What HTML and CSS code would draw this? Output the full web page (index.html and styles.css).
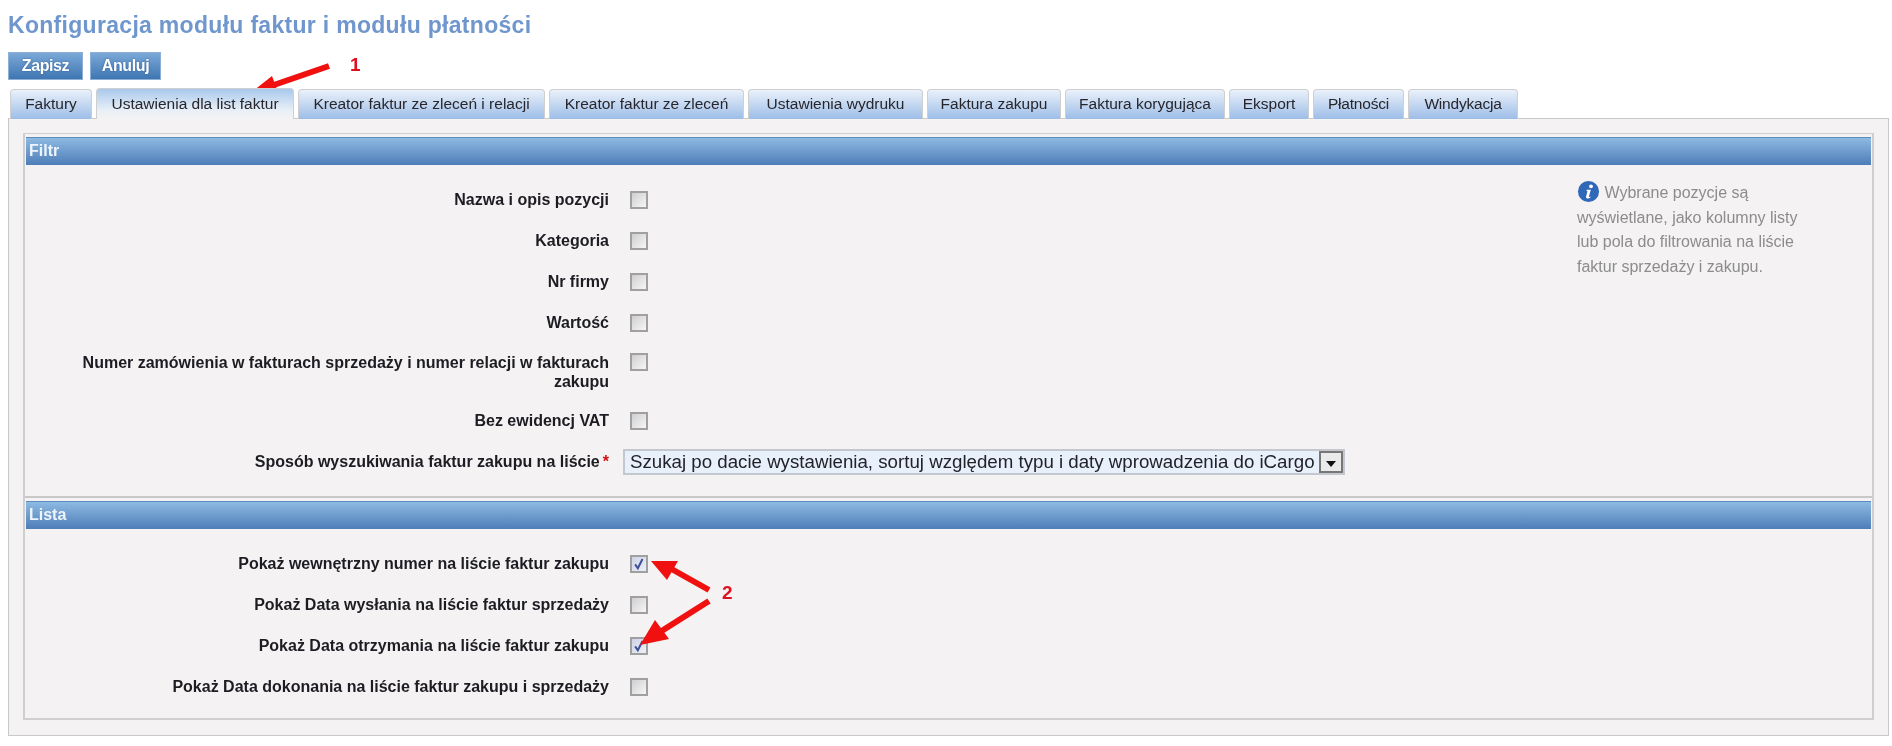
FILE: index.html
```html
<!DOCTYPE html>
<html lang="pl">
<head>
<meta charset="utf-8">
<title>Konfiguracja modułu faktur i modułu płatności</title>
<link rel="stylesheet" href="styles.css">
</head>
<body>
<div class="page">
  <h1 class="title">Konfiguracja modułu faktur i modułu płatności</h1>
  <div class="actions">
    <button class="btn btn-save" type="button">Zapisz</button>
    <button class="btn btn-cancel" type="button">Anuluj</button>
  </div>
  <nav class="tabs">
    <a class="tab">Faktury</a>
    <a class="tab active">Ustawienia dla list faktur</a>
    <a class="tab">Kreator faktur ze zleceń i relacji</a>
    <a class="tab">Kreator faktur ze zleceń</a>
    <a class="tab">Ustawienia wydruku</a>
    <a class="tab">Faktura zakupu</a>
    <a class="tab">Faktura korygująca</a>
    <a class="tab">Eksport</a>
    <a class="tab tight">Płatności</a>
    <a class="tab tight">Windykacja</a>
  </nav>
  <div class="panel">
    <div class="fieldset">
      <h2 class="section-head">Filtr</h2>
      <div class="section filter">
        <div class="form">
          <div class="row"><label class="lbl">Nazwa i opis pozycji</label><span class="cb"></span></div>
          <div class="row"><label class="lbl">Kategoria</label><span class="cb"></span></div>
          <div class="row"><label class="lbl">Nr firmy</label><span class="cb"></span></div>
          <div class="row"><label class="lbl">Wartość</label><span class="cb"></span></div>
          <div class="row row-multi"><label class="lbl">Numer zamówienia w fakturach sprzedaży i numer relacji w fakturach zakupu</label><span class="cb"></span></div>
          <div class="row"><label class="lbl">Bez ewidencj VAT</label><span class="cb"></span></div>
          <div class="row"><label class="lbl">Sposób wyszukiwania faktur zakupu na liście<span class="req">*</span></label>
            <div class="select"><span class="select-text">Szukaj po dacie wystawienia, sortuj względem typu i daty wprowadzenia do iCargo</span><span class="select-arrow"></span></div>
          </div>
        </div>
        <p class="note"><svg class="info" viewBox="0 0 24 24" width="23" height="23"><circle cx="12" cy="12" r="11" fill="#2f68b8"/><circle cx="14.6" cy="6.6" r="2" fill="#fff"/><path d="M10 10.2h4.400l-2 7.200c-.1.500.3.600 1.600-.3l.2.800c-1.200 1.300-5.200 2.200-4.800-.2l1.500-6.200-1.100-.3z" fill="#fff"/></svg> Wybrane pozycje są wyświetlane, jako kolumny listy lub pola do filtrowania na liście faktur sprzedaży i zakupu.</p>
      </div>
      <h2 class="section-head">Lista</h2>
      <div class="section list">
        <div class="form">
          <div class="row"><label class="lbl">Pokaż wewnętrzny numer na liście faktur zakupu</label><span class="cb checked"><svg viewBox="0 0 18 18" width="16" height="16"><path d="M4 9.500l3.500 5L13.500 2.500" fill="none" stroke="#3d4f96" stroke-width="2.500"/></svg></span></div>
          <div class="row"><label class="lbl">Pokaż Data wysłania na liście faktur sprzedaży</label><span class="cb"></span></div>
          <div class="row"><label class="lbl">Pokaż Data otrzymania na liście faktur zakupu</label><span class="cb checked"><svg viewBox="0 0 18 18" width="16" height="16"><path d="M4 9.500l3.500 5L13.500 2.500" fill="none" stroke="#3d4f96" stroke-width="2.500"/></svg></span></div>
          <div class="row"><label class="lbl">Pokaż Data dokonania na liście faktur zakupu i sprzedaży</label><span class="cb"></span></div>
        </div>
      </div>
    </div>
  </div>
  <svg class="marks" width="1892" height="746" viewBox="0 0 1892 746">
    <g fill="none" stroke="#f01010" stroke-width="6">
      <path d="M329 66 L268 87"/>
      <path d="M709 590 L668 567"/>
      <path d="M709 601 L660 632"/>
    </g>
    <g fill="#f01010">
      <path d="M249 94 L272 76 L279 95 Z"/>
      <path d="M651 561 L678 561 L667 580 Z"/>
      <path d="M640 645 L655 620 L669 639 Z"/>
    </g>
  </svg>
  <span class="mark-num mark-1">1</span>
  <span class="mark-num mark-2">2</span>
</div>
</body>
</html>
```
FILE: styles.css
```css
* { box-sizing: border-box; }
html, body { margin: 0; padding: 0; background: #fff; }
body { font-family: "Liberation Sans", Arial, sans-serif; color: #1c1c22; }
.page { position: relative; width: 1892px; height: 746px; padding: 12px 3px 0 8px; overflow: hidden; filter: blur(.35px); }
.title { margin: 0; font-size: 23px; line-height: 26px; font-weight: bold; color: #6f96cd; letter-spacing: .3px; }
.actions { display: flex; gap: 7px; margin-top: 14px; }
.btn { height: 28px; padding: 0; font: bold 16px "Liberation Sans", Arial, sans-serif; color: #fff; letter-spacing: -.4px; border: 1px solid #8db1d6; background: linear-gradient(#7ba8d8, #3f76b2); text-shadow: 0 0 2px #2d5c96; }
.btn-save { width: 75px; }
.btn-cancel { width: 71px; }
.tabs { display: flex; gap: 4px; margin-top: 9px; align-items: flex-end; height: 30px; position: relative; z-index: 1; margin-bottom: -1px; padding-left: 2px; }
.tab { height: 30px; line-height: 28px; text-align: center; font-size: 15.500px; white-space: nowrap; color: #26262c; border: 1px solid #cfcfcf; border-bottom: 0; border-radius: 4px 4px 0 0; background: linear-gradient(#eaf1fa, #9dbde8); }
.tab:nth-child(1) { width: 82px; }
.tab:nth-child(2) { width: 198px; }
.tab:nth-child(3) { width: 247px; }
.tab:nth-child(4) { width: 195px; }
.tab:nth-child(5) { width: 175px; }
.tab:nth-child(6) { width: 134px; }
.tab:nth-child(7) { width: 160px; }
.tab:nth-child(8) { width: 80px; }
.tab:nth-child(9) { width: 91px; }
.tab:nth-child(10) { width: 110px; }
.tab.tight { letter-spacing: -.2px; }
.tab.active { height: 31px; line-height: 29px; background: linear-gradient(#a9c9ec, #e8eff7 70%, #f4f2f2); }
.panel { height: 618px; padding: 14px 14px 15px 14px; background: #f4f2f2; border: 1px solid #c8c8c8; }
.fieldset { height: 100%; padding: 3px 1px 0; border: 1px solid #cfcfcf; border-width: 1px 2px 2px 2px; }
.section-head { height: 28px; margin: 0; padding: 0 0 0 3px; font-size: 16px; line-height: 26px; font-weight: bold; color: #eef4fb; background: linear-gradient(#8dbae2, #4e7db8); border-top: 1px solid #5f8cbc; }
.section { position: relative; }
.filter { display: flex; justify-content: space-between; height: 333px; padding-top: 14px; border-bottom: 2px solid #c8c8c8; margin: 0 -1px 3px; }
.list { padding-top: 14px; margin-left: -1px; }
.form { width: 1320px; }
.row { display: flex; align-items: center; min-height: 41px; }
.row-multi { align-items: flex-start; padding-top: 10px; padding-bottom: 9px; line-height: 19px; }
.lbl { display: block; width: 584px; padding-left: 34px; text-align: right; font-size: 16px; font-weight: bold; }
.req { color: #d01010; margin-left: 3px; }
.cb { display: flex; align-items: center; justify-content: center; flex: none; width: 18px; height: 18px; margin-left: 21px; border: 2px solid #a0a0a0; background: linear-gradient(135deg, #cfcfd2, #f6f6f6); }
.cb.checked { background: linear-gradient(135deg, #cdd3e6, #eef0f6); }
.select { display: flex; align-items: stretch; width: 722px; height: 26px; margin-left: 14px; border: 2px solid #c4c8ce; background: #e8f0fb; }
.select-text { flex: 1; padding-left: 5px; font-size: 18.700px; line-height: 21px; white-space: nowrap; color: #22222a; }
.select-arrow { position: relative; flex: none; width: 24px; background: #eaeaea; border: 2px solid #777; }
.select-arrow::after { content: ""; position: absolute; left: 5px; top: 8px; border: 5px solid transparent; border-top: 6px solid #111; border-bottom: 0; }
.note { width: 232px; margin: 1px 63px 0 0; font-size: 16px; line-height: 24.500px; color: #8c8c8c; }
.info { vertical-align: -5px; }
.marks { position: absolute; left: 0; top: 0; pointer-events: none; }
.mark-num { position: absolute; font-size: 19px; font-weight: bold; line-height: 20px; color: #e01020; }
.mark-1 { left: 350px; top: 55px; }
.mark-2 { left: 722px; top: 583px; }
```
